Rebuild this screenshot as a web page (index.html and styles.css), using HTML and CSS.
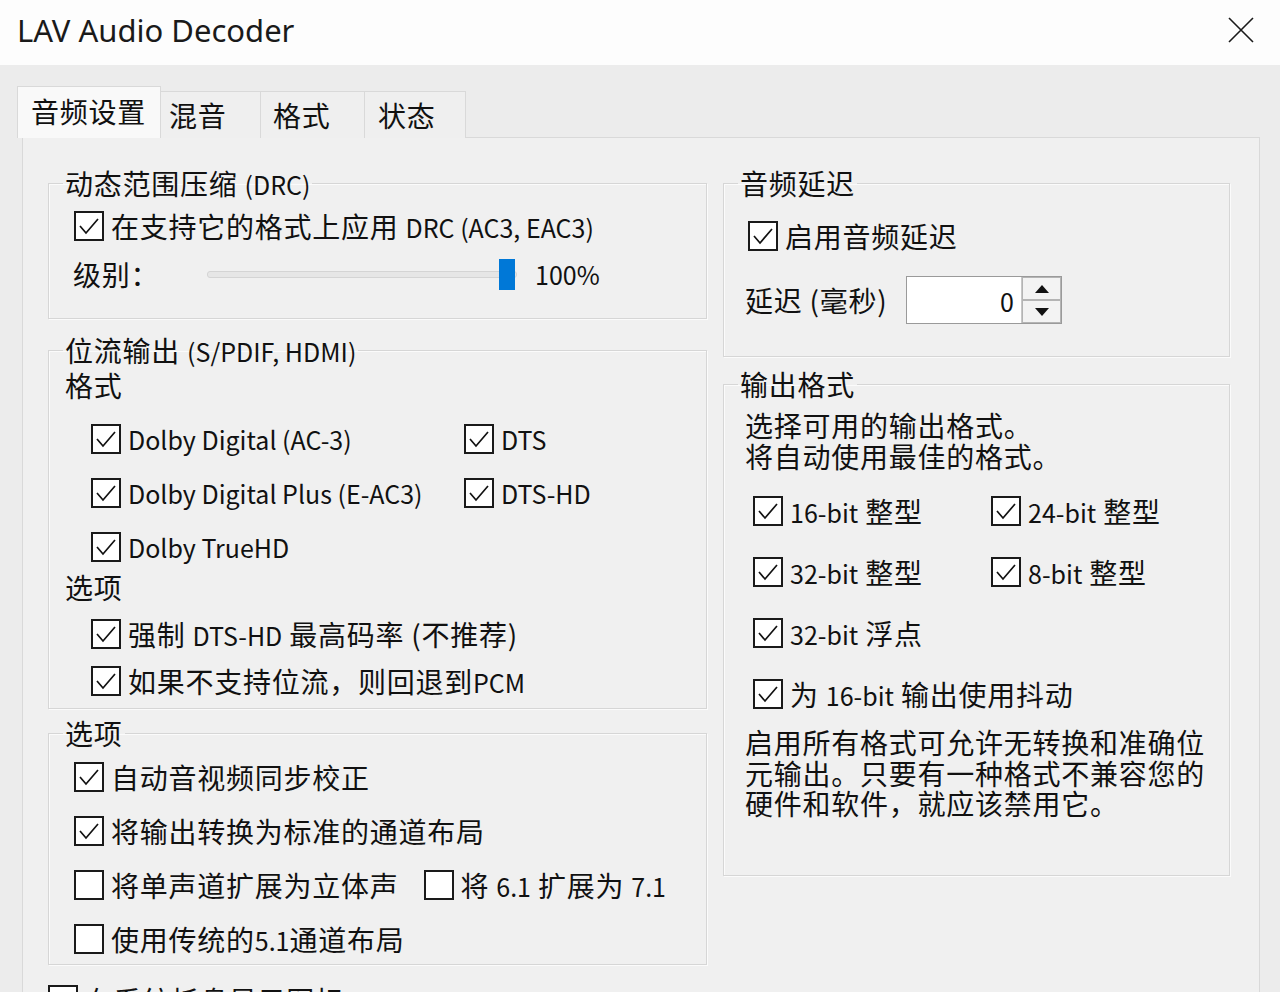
FILE: index.html
```html
<!DOCTYPE html>
<html lang="zh">
<head>
    <meta charset="UTF-8">
    <meta name="viewport" content="width=device-width, initial-scale=1.0">
    <link rel="stylesheet" href="styles.css">
    <title>LAV Audio Decoder</title>
</head>
<body>
    <div class="titlebar">
        <span class="title">LAV Audio Decoder</span>
        <svg class="close" width="26" height="26" viewBox="0 0 26 26">
            <path d="M1 1 L25 25 M25 1 L1 25" stroke="#1a1a1a" stroke-width="1.6" fill="none"/>
        </svg>
    </div>

    <div class="dialog">
        <div class="tabs">
            <div class="tab active">音频设置</div>
            <div class="tab t2">混音</div>
            <div class="tab t3">格式</div>
            <div class="tab t4">状态</div>
        </div>

        <div class="panel">
            <!-- 左列 -->
            <div class="col">
                <fieldset class="group drc">
                    <legend>动态范围压缩 <span class="en">(DRC)</span></legend>
                    <div class="body">
                        <label class="check h48"><span class="box on"></span><span class="txt">在支持它的格式上应用 <span class="en">DRC (AC3, EAC3)</span></span></label>
                        <div class="level-row">
                            <span class="level-label">级别：</span>
                            <div class="slider"><span class="thumb"></span></div>
                            <span class="level-value en">100%</span>
                        </div>
                    </div>
                </fieldset>

                <fieldset class="group bitstream">
                    <legend>位流输出 <span class="en">(S/PDIF, HDMI)</span></legend>
                    <div class="body">
                        <div class="subhead">格式</div>
                        <div class="bs-grid">
                            <label class="check"><span class="box on"></span><span class="txt en">Dolby Digital (AC-3)</span></label>
                            <label class="check"><span class="box on"></span><span class="txt en">DTS</span></label>
                            <label class="check"><span class="box on"></span><span class="txt en">Dolby Digital Plus (E-AC3)</span></label>
                            <label class="check"><span class="box on"></span><span class="txt en">DTS-HD</span></label>
                            <label class="check"><span class="box on"></span><span class="txt en">Dolby TrueHD</span></label>
                        </div>
                        <div class="subhead second">选项</div>
                        <div class="bs-options">
                            <label class="check h47"><span class="box on"></span><span class="txt">强制 <span class="en">DTS-HD</span> 最高码率 (不推荐)</span></label>
                            <label class="check h47"><span class="box on"></span><span class="txt">如果不支持位流，则回退到<span class="en">PCM</span></span></label>
                        </div>
                    </div>
                </fieldset>

                <fieldset class="group options">
                    <legend>选项</legend>
                    <div class="body">
                        <label class="check"><span class="box on"></span><span class="txt">自动音视频同步校正</span></label>
                        <label class="check"><span class="box on"></span><span class="txt">将输出转换为标准的通道布局</span></label>
                        <div class="pair">
                            <label class="check"><span class="box"></span><span class="txt">将单声道扩展为立体声</span></label>
                            <label class="check"><span class="box"></span><span class="txt">将 <span class="en">6.1</span> 扩展为 <span class="en">7.1</span></span></label>
                        </div>
                        <label class="check"><span class="box"></span><span class="txt">使用传统的<span class="en">5.1</span>通道布局</span></label>
                    </div>
                </fieldset>

                <label class="check tray"><span class="box"></span><span class="txt">在系统托盘显示图标</span></label>
            </div>

            <!-- 右列 -->
            <div class="col">
                <fieldset class="group delay">
                    <legend>音频延迟</legend>
                    <div class="body">
                        <label class="check h50"><span class="box on"></span><span class="txt">启用音频延迟</span></label>
                        <div class="delay-row">
                            <span class="delay-label">延迟 (毫秒)</span>
                            <div class="spin">
                                <span class="spin-value"><span class="en">0</span></span>
                                <div class="spin-buttons">
                                    <span class="spin-btn"><i class="arrow up"></i></span>
                                    <span class="spin-btn"><i class="arrow down"></i></span>
                                </div>
                            </div>
                        </div>
                    </div>
                </fieldset>

                <fieldset class="group outfmt">
                    <legend>输出格式</legend>
                    <div class="body">
                        <p class="text">选择可用的输出格式。<br>将自动使用最佳的格式。</p>
                        <div class="fmt-grid">
                            <label class="check"><span class="box on"></span><span class="txt"><span class="en">16-bit</span> 整型</span></label>
                            <label class="check"><span class="box on"></span><span class="txt"><span class="en">24-bit</span> 整型</span></label>
                            <label class="check"><span class="box on"></span><span class="txt"><span class="en">32-bit</span> 整型</span></label>
                            <label class="check"><span class="box on"></span><span class="txt"><span class="en">8-bit</span> 整型</span></label>
                            <label class="check"><span class="box on"></span><span class="txt"><span class="en">32-bit</span> 浮点</span></label>
                            <span></span>
                            <label class="check wide"><span class="box on"></span><span class="txt">为 <span class="en">16-bit</span> 输出使用抖动</span></label>
                        </div>
                        <p class="text note">启用所有格式可允许无转换和准确位<br>元输出。只要有一种格式不兼容您的<br>硬件和软件，就应该禁用它。</p>
                    </div>
                </fieldset>
            </div>
        </div>
    </div>

    <script>
        // 勾选框里的对勾
        document.querySelectorAll('.box.on').forEach(function(box) {
            box.innerHTML = '<svg width="26" height="26" viewBox="0 0 26 26"><polyline points="4,13 10,20 22,6" fill="none" stroke="#111" stroke-width="1.7"/></svg>';
        });
    </script>
</body>
</html>
```

FILE: styles.css
```css
html, body {
    margin: 0;
    height: 992px;
    overflow: hidden;
}
body {
    background-color: #ececec; /* 对话框背景 */
    font-family: "Noto Sans CJK SC", sans-serif;
    font-size: 28px;
    letter-spacing: 0.75px; /* 中文字距 */
    color: #111;
}
.en {
    font-size: 25px; /* 西文偏窄 */
    letter-spacing: 0;
    line-height: 1;
}

/* 标题栏 */
.titlebar {
    height: 65px;
    background-color: #fdfdfd;
    display: flex;
    align-items: center;
    justify-content: space-between;
    padding: 0 26px 0 17px;
}
.title {
    font-family: "Noto Sans", "Open Sans", sans-serif;
    font-size: 31px;
    letter-spacing: 0;
    color: #1a1a1a;
    margin-top: -6px;
}
.close {
    margin-top: -6px;
}

.dialog {
    padding: 21px 20px 0 17px;
}

/* 选项卡 */
.tabs {
    display: flex;
    align-items: flex-end;
    position: relative;
    z-index: 1;
    margin-bottom: -1px;
}
.tab {
    box-sizing: border-box;
    height: 47px;
    line-height: 47px;
    padding-left: 10px;
    background-color: #efefef;
    border: 1px solid #d9d9d9;
    border-left: none;
    border-bottom: none;
}
.tab.active {
    width: 144px;
    height: 52px;
    line-height: 48px;
    padding-left: 13px;
    background-color: #f9f9f9;
    border-left: 1px solid #d9d9d9;
}
.tab.t2 { width: 100px; padding-left: 8px; }
.tab.t3 { width: 104px; padding-left: 12px; }
.tab.t4 { width: 101px; padding-left: 13px; }

.panel {
    margin-left: 5px;
    height: 900px;
    background-color: #f0f0f0;
    border: 1px solid #d9d9d9;
    padding: 27px 0 0 25px;
    display: grid;
    grid-template-columns: 659px 507px;
    column-gap: 16px;
    align-items: start;
}

/* 分组框 */
.group {
    margin: 0;
    padding: 0;
    min-width: 0;
    border: 1px solid #d6d6d6;
    box-shadow: inset 1px 1px 0 #fbfbfb, 1px 1px 0 #fbfbfb;
}
.group legend {
    margin-left: 14px;
    padding: 0 2px;
    line-height: 36px;
}

/* 勾选框 */
.check {
    display: flex;
    align-items: center;
    gap: 7px;
    height: 50px;
    white-space: nowrap;
}
.check .txt {
    line-height: 30px;
}
.box {
    box-sizing: border-box;
    width: 30px;
    height: 30px;
    flex: none;
    border: 2px solid #1a1a1a;
    background-color: #fff;
}
.box svg {
    display: block;
}
.h47 { height: 47px; }
.h48 { height: 48px; }
.h50 { height: 50px; }

/* DRC */
.drc .body {
    padding: 1px 0 20px 25px;
}
.level-row {
    display: flex;
    align-items: center;
    height: 48px;
}
.level-label {
    width: 134px;
    margin-left: -1px;
}
.slider {
    position: relative;
    box-sizing: border-box;
    width: 310px;
    height: 7px;
    background-color: #e6e6e6;
    border: 1px solid #d4d4d4;
    border-radius: 3px;
}
.thumb {
    position: absolute;
    right: 1px;
    top: -13px;
    width: 16px;
    height: 31px;
    background-color: #0078d7;
}
.level-value {
    margin-left: 18px;
}

/* 位流输出 */
.bitstream {
    margin-top: 13px;
}
.bitstream .body {
    padding: 0 0 4px 16px;
}
.subhead {
    height: 34px;
    line-height: 34px;
}
.subhead.second {
    margin-top: -4px;
}
.bs-grid {
    display: grid;
    grid-template-columns: 373px auto;
    grid-auto-rows: 54px;
    margin-top: 10px;
    padding-left: 26px;
}
.bs-grid .check {
    height: 54px;
}
.bs-options {
    margin-top: 6px;
    padding-left: 26px;
}

/* 选项 */
.options {
    margin-top: 6px;
}
.options .body {
    padding: 1px 0 0 25px;
    display: flex;
    flex-direction: column;
    gap: 4px;
}
.pair {
    display: flex;
    gap: 25px;
}
.tray {
    margin-top: 10px;
}

/* 音频延迟 */
.delay .body {
    padding: 10px 0 31px 24px;
}
.delay-row {
    display: flex;
    align-items: center;
    height: 50px;
    margin-top: 14px;
    margin-left: -3px;
}
.delay-label {
    width: 161px;
}
.spin {
    display: flex;
    height: 48px;
    border: 1px solid #9a9a9a;
    box-sizing: border-box;
}
.spin-value {
    width: 114px;
    box-sizing: border-box;
    background-color: #fff;
    text-align: right;
    padding-right: 7px;
    line-height: 46px;
}
.spin-buttons {
    width: 39px;
    display: flex;
    flex-direction: column;
    border-left: 1px solid #c8c8c8;
}
.spin-btn {
    flex: 1;
    display: flex;
    align-items: center;
    justify-content: center;
    background-color: #f3f3f3;
    border: 1px solid #b4b4b4;
}
.arrow {
    width: 0;
    height: 0;
    border-left: 7px solid transparent;
    border-right: 7px solid transparent;
}
.arrow.up { border-bottom: 8px solid #111; }
.arrow.down { border-top: 8px solid #111; }

/* 输出格式 */
.outfmt {
    margin-top: 9px;
}
.outfmt .body {
    padding: 8px 0 56px 21px;
}
.text {
    margin: 0;
    line-height: 31px;
}
.fmt-grid {
    display: grid;
    grid-template-columns: 238px auto;
    grid-auto-rows: 56px;
    row-gap: 5px;
    margin-top: 11px;
    padding-left: 8px;
}
.fmt-grid .check {
    height: 56px;
}
.fmt-grid .wide {
    grid-column: 1 / 3;
}
.note {
    margin-top: 5px;
    line-height: 30.5px;
}
```
